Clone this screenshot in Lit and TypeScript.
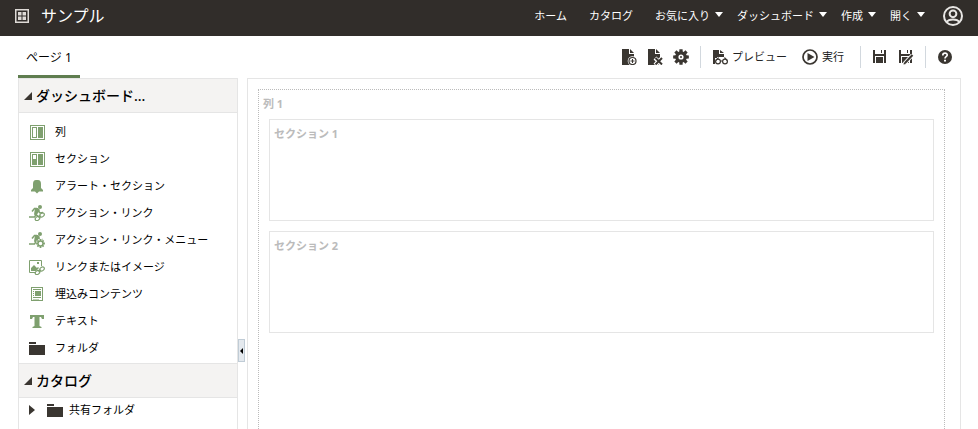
import { LitElement, html, css, svg, TemplateResult } from "lit";
import { customElement, property } from "lit/decorators.js";

const person = svg`
  <circle cx="11" cy="2" r="2" fill="currentColor"/>
  <path d="M3 6.500 5.500 3.500H8M9.500 6l1.500 2 3-.5M7.500 9l-2 3H0" fill="none" stroke="currentColor" stroke-width="1.5"/>
  <path d="M6 3h3l2 2-3 4.500 2 1.500-1 1-4-2.500z" fill="currentColor"/>`;
const chain = svg`
  <g fill="none" stroke="currentColor" stroke-width="1.2">
    <ellipse cx="8.500" cy="13.500" rx="2.500" ry="1.800" transform="rotate(-40 8.500 13.500)"/>
    <ellipse cx="13" cy="10" rx="2.500" ry="1.800" transform="rotate(-40 13 10)"/>
    <path d="M9.500 12.800l2.500-2"/>
  </g>`;
const gearPath = (cx: number, cy: number, r: number, hole: number) => {
  const pts: string[] = [];
  for (let i = 0; i < 8; i++) {
    const a = (i * Math.PI) / 4;
    for (const [d, k] of [[-0.3, 0.72], [-0.2, 1], [0.2, 1], [0.3, 0.72]]) {
      pts.push(`${(cx + Math.cos(a + d) * r * k).toFixed(2)} ${(cy + Math.sin(a + d) * r * k).toFixed(2)}`);
    }
  }
  return `M${pts.join("L")}ZM${cx - hole} ${cy}a${hole} ${hole} 0 1 0 ${hole * 2} 0a${hole} ${hole} 0 1 0 ${-hole * 2} 0Z`;
};
const doc = svg`<path d="M1 0h7v5h5v11H1z" fill="currentColor"/><path d="M9 0l4 4H9z" fill="currentColor"/>`;
const floppy = svg`<path fill="currentColor" d="M1 1h2v4h9V1h2v13h-2V7H3v7H1zM4 8h7v6H4zM9 1h1v3H9z"/>`;

const icons: Record<string, TemplateResult> = {
  grid: svg`<path fill="currentColor" fill-rule="evenodd" d="M1 1h14v14H1zM2.500 2.500v11h11v-11z"/><path fill="currentColor" d="M4 4h3.500v3.500H4zM8.500 4H12v3.500H8.500zM4 8.500h3.500V12H4zM8.500 8.500H12V12H8.500z"/>`,
  user: svg`<g fill="none" stroke="currentColor" stroke-width="1.6"><circle cx="8" cy="8" r="7.2"/><circle cx="8" cy="6.2" r="2.7"/><path d="M3.2 12.8c1.2-2.6 8.4-2.6 9.6 0"/></g>`,
  pageAdd: svg`${doc}<circle cx="11.500" cy="12" r="4.800" fill="#fff"/><circle cx="11.500" cy="12" r="3.500" fill="#fff" stroke="currentColor" stroke-width="1.2"/><path d="M9.500 12h4M11.500 10v4" stroke="currentColor"/>`,
  pageDelete: svg`${doc}<path d="M8 9l7 7M15 9l-7 7" stroke="#fff" stroke-width="4"/><path d="M8.500 9l6.500 6.500M15 9l-6.500 6.500" stroke="currentColor" stroke-width="2"/>`,
  gear: svg`<path fill="currentColor" fill-rule="evenodd" d=${gearPath(8, 8, 8, 2.6)}/><circle cx="8" cy="8" r="1" fill="currentColor"/>`,
  preview: svg`<path d="M1 1h6v4h5v3H5v1H3v6H1zM8 1l4 3H8z" fill="currentColor"/><g fill="#fff" stroke="currentColor" stroke-width="1.2"><circle cx="6" cy="12.500" r="2.400"/><circle cx="13" cy="12.500" r="2.400"/><path d="M4 11.500l2-2.500h1M15 11.500l-2-2.500h-1M8.500 12h2" fill="none"/></g>`,
  run: svg`<circle cx="8" cy="8" r="7" fill="none" stroke="currentColor" stroke-width="1.7"/><path d="M5.500 4v8l7-4z" fill="currentColor"/>`,
  save: floppy,
  saveAs: svg`${floppy}<path d="M6 15l8.500-9" stroke="#fff" stroke-width="4"/><path d="M7 14l7.500-8" stroke="currentColor" stroke-width="2"/><path d="M5.500 15.500l.5-2.500 2 2z" fill="currentColor"/>`,
  help: svg`<circle cx="8" cy="8" r="7" fill="currentColor"/><path d="M5.800 6.400c0-3 4.600-2.800 4.400-.2C10 7.800 8 7.600 8 9.500" fill="none" stroke="#fff" stroke-width="1.7"/><path d="M7 10.800h2v1.700H7z" fill="#fff"/>`,
  column: svg`<path fill="currentColor" fill-rule="evenodd" d="M1 1h15v15H1zM2 2v13h13V2zM3 3h5v11H3zM4 4v9h3V4zM9 3h5v11H9z"/>`,
  section: svg`<path fill="currentColor" fill-rule="evenodd" d="M1 1h15v15H1zM2 2v13h13V2zM3 3h5v11H3zM4 4v4h3V4zM9 3h5v11H9z"/>`,
  bell: svg`<path fill="currentColor" d="M4 10V6c0-2.500 1-4 3-4h2c2 0 3 1.500 3 4v4l2 2v1.500H2V12zM6 13.500h4L8 15.500z"/>`,
  actionLink: svg`${person}${chain}`,
  actionMenu: svg`${person}<circle cx="11.500" cy="11.500" r="4.500" fill="#fff"/><path fill="currentColor" fill-rule="evenodd" d=${gearPath(11.5, 11.5, 4.5, 1.8)}/>`,
  image: svg`<path fill="none" stroke="currentColor" d="M7 13.500H.500v-12h12V7"/><path fill="currentColor" d="M2 12V9l3-3 3 3 1-1 1 1-3 3zM8 3h2v2H8z"/>${chain}`,
  embed: svg`<path fill="currentColor" fill-rule="evenodd" d="M2 1h12v14H2zM3 2v12h10V2zM4 3h8v1H4zM4 5h1v1H4zM4 7h1v1H4zM6 5h6v5H6zM4 9h1v1H4zM4 11h8v1H4zM4 13h6v.500H4z"/>`,
  text: svg`<path fill="currentColor" d="M1 2h14v4h-2l-1-2h-1.500v9l2 1v1h-9v-1l2-1V4H4L3 6H1z"/>`,
  folder: svg`<path fill="currentColor" d="M0 2h7v2H0zM0 5h16v10H0z"/>`,
};

@customElement("ui-icon")
export class UiIcon extends LitElement {
  @property() name = "";
  static styles = css`
    :host { display: block; flex: none; width: 16px; height: 16px; }
    svg { display: block; width: 100%; height: 100%; }
  `;
  render() {
    return html`<svg viewBox="0 0 16 16" aria-hidden="true">${icons[this.name]}</svg>`;
  }
}

const navItems = [
  { label: "ホーム" },
  { label: "カタログ" },
  { label: "お気に入り", menu: true },
  { label: "ダッシュボード", menu: true },
  { label: "作成", menu: true },
  { label: "開く", menu: true },
];

const objects = [
  ["column", "列"],
  ["section", "セクション"],
  ["bell", "アラート・セクション"],
  ["actionLink", "アクション・リンク"],
  ["actionMenu", "アクション・リンク・メニュー"],
  ["image", "リンクまたはイメージ"],
  ["embed", "埋込みコンテンツ"],
  ["text", "テキスト"],
  ["folder", "フォルダ"],
];

@customElement("app-root")
export class AppRoot extends LitElement {
  static styles = css`
    :host {
      display: flex;
      flex-direction: column;
      height: 100vh;
      overflow: hidden;
      background: #fff;
      color: #000;
      font: 11px/16px "Noto Sans", "Noto Sans CJK JP", sans-serif;
    }
    * { box-sizing: border-box; }
    button {
      display: flex;
      align-items: center;
      padding: 0;
      border: 0;
      background: none;
      color: inherit;
      font: inherit;
      white-space: nowrap;
    }
    a { color: inherit; text-decoration: none; white-space: nowrap; }
    h1, h2, ul { margin: 0; padding: 0; list-style: none; }

    .header {
      display: flex;
      align-items: center;
      flex: none;
      height: 36px;
      padding: 0 15px 4px 14px;
      background: #312d2a;
      color: #fff;
    }
    .brand { margin-left: 11px; font-size: 16px; font-weight: 400; line-height: 24px; }
    .nav { display: flex; gap: 14px; margin-left: auto; }
    .plain { margin-right: 8px; }
    .menu { gap: 5px; }
    .menu::after {
      content: "";
      margin-bottom: 3px;
      border: 4px solid transparent;
      border-top: 5px solid #fff;
      border-bottom: 0;
    }
    .user { margin-left: 18px; color: #e8e6e4; }
    .user ui-icon { width: 20px; height: 20px; }
    .grid { color: #dedad6; }

    .bar {
      display: flex;
      align-items: stretch;
      justify-content: space-between;
      flex: none;
      height: 42px;
      padding: 0 25px 0 18px;
    }
    .tab {
      padding: 4px 8px 0;
      border-bottom: 3px solid #5f7d4f;
      font-size: 12px;
    }
    .tools { display: flex; align-items: center; gap: 10px; color: #3a3631; }
    .tool { gap: 4px; }
    .label { padding-right: 5px; color: #222; }
    .separator { width: 1px; height: 22px; margin: 0 1px; background: #d2d8de; }

    .work { display: flex; flex: 1; min-height: 0; padding: 0 17px 0 18px; }
    .side {
      flex: none;
      width: 220px;
      border: 1px solid #e5e5e5;
      border-bottom: 0;
    }
    .heading {
      height: 34px;
      border-bottom: 1px solid #e5e5e5;
      background: #f4f3f2;
      font-size: 14px;
      font-weight: 500;
      line-height: 24px;
    }
    .heading button { width: 100%; height: 33px; padding-left: 5px; gap: 4px; }
    .heading button::before {
      content: "";
      border-left: 8px solid transparent;
      border-bottom: 8px solid #3a3631;
    }
    .objects { padding: 5px 0 2px; }
    .object { width: 100%; height: 27px; padding-left: 10px; gap: 10px; color: #000; }
    .object ui-icon { color: #7fa06f; }
    .object ui-icon.dark, .dark { color: #3a3631; }
    .catalog { border-top: 1px solid #e5e5e5; }
    .folder { height: 24px; padding-left: 10px; gap: 6px; }
    .folder::before {
      content: "";
      margin-right: 6px;
      border: 5px solid transparent;
      border-left: 6px solid #3a3631;
      border-right: 0;
    }
    .splitter { display: flex; align-items: center; flex: none; width: 9px; padding-top: 194px; }
    .handle {
      justify-content: center;
      width: 7px;
      height: 23px;
      border: 1px solid #c0ccd6;
      background: #e4e9ee;
    }
    .handle::before {
      content: "";
      border: 3px solid transparent;
      border-right: 3px solid #000;
      border-left: 0;
    }
    .canvas {
      flex: 1;
      min-width: 0;
      padding: 10px 15px 0 10px;
      border: 1px solid #e5e5e5;
      border-bottom: 0;
    }
    .layout-column {
      display: flex;
      flex-direction: column;
      gap: 10px;
      height: 100%;
      padding: 5px 10px 0;
      border: 1px dotted #bbb;
      border-bottom: 0;
      color: #bbb;
    }
    .name { font-size: 11px; font-weight: 700; line-height: 18px; }
    .layout-column > .name { margin: 0 0 -4px -6px; }
    .layout-section { height: 102px; padding: 5px 4px; border: 1px solid #e5e5e5; }
  `;

  private tool(icon: string, name: string, label = "") {
    return html`<button class="tool" aria-label=${name}>
      <ui-icon name=${icon}></ui-icon>${label ? html`<span class="label">${label}</span>` : ""}
    </button>`;
  }

  render() {
    return html`
      <header class="header">
        <ui-icon class="grid" name="grid"></ui-icon>
        <h1 class="brand">サンプル</h1>
        <nav class="nav">
          ${navItems.map((n) =>
            n.menu
              ? html`<button class="menu" aria-haspopup="menu">${n.label}</button>`
              : html`<a class="plain" href="#">${n.label}</a>`
          )}
        </nav>
        <button class="user" aria-label="ユーザー"><ui-icon name="user"></ui-icon></button>
      </header>
      <div class="bar">
        <button class="tab">ページ 1</button>
        <div class="tools" role="toolbar">
          ${this.tool("pageAdd", "ページの追加")}
          ${this.tool("pageDelete", "ページの削除")}
          ${this.tool("gear", "ツール")}
          <span class="separator"></span>
          ${this.tool("preview", "プレビュー", "プレビュー")}
          ${this.tool("run", "実行", "実行")}
          <span class="separator"></span>
          ${this.tool("save", "保存")}
          ${this.tool("saveAs", "別名保存")}
          <span class="separator"></span>
          ${this.tool("help", "ヘルプ")}
        </div>
      </div>
      <main class="work">
        <aside class="side">
          <h2 class="heading"><button aria-expanded="true">ダッシュボード...</button></h2>
          <ul class="objects">
            ${objects.map(
              ([icon, label]) => html`<li>
                <button class="object">
                  <ui-icon class=${icon === "folder" ? "dark" : ""} name=${icon}></ui-icon>${label}
                </button>
              </li>`
            )}
          </ul>
          <div class="catalog">
            <h2 class="heading"><button aria-expanded="true">カタログ</button></h2>
            <button class="folder" aria-expanded="false">
              <ui-icon class="dark" name="folder"></ui-icon>共有フォルダ
            </button>
          </div>
        </aside>
        <div class="splitter"><button class="handle" aria-label="パネルを閉じる"></button></div>
        <section class="canvas">
          <div class="layout-column">
            <h2 class="name">列 1</h2>
            <div class="layout-section"><h2 class="name">セクション 1</h2></div>
            <div class="layout-section"><h2 class="name">セクション 2</h2></div>
          </div>
        </section>
      </main>
    `;
  }
}
